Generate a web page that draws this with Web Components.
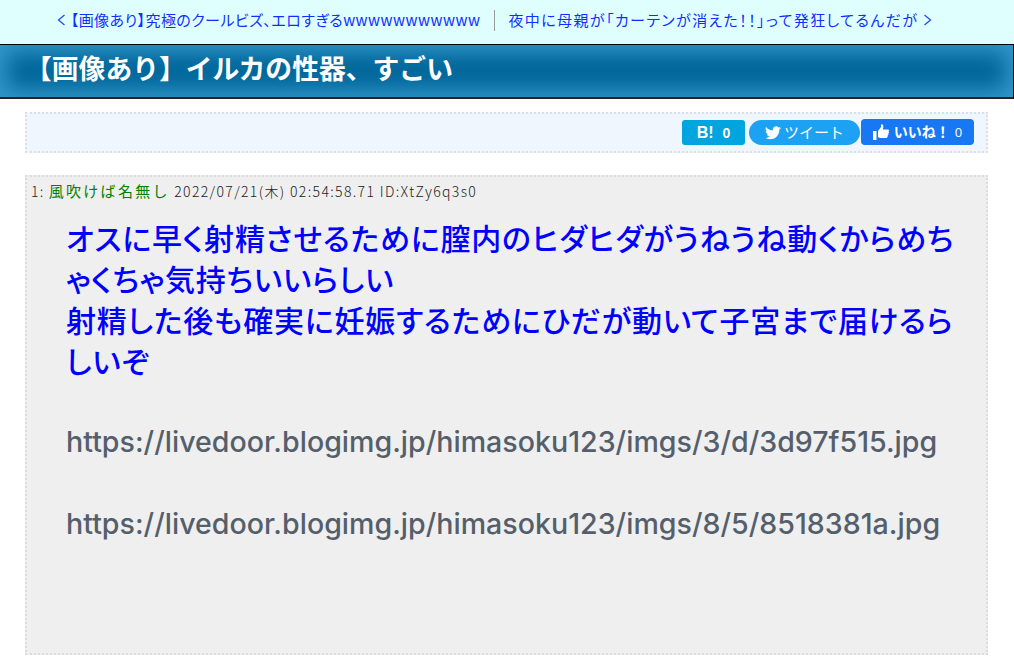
<!DOCTYPE html>
<html lang="ja">
<head>
<meta charset="utf-8">
<title>イルカ</title>
<style>
  html, body { margin: 0; padding: 0; background: #fff; height: 662px; overflow: hidden; }
  body { font-family: "Open Sans", "Noto Sans CJK JP", sans-serif; }
</style>
</head>
<body>
<top-nav></top-nav>
<article-title>【画像あり】イルカの性器、すごい</article-title>
<main-wrap>
  <share-bar></share-bar>
  <res-box number="1:" name="風吹けば名無し" date="2022/07/21(木) 02:54:58.71 ID:XtZy6q3s0">
    オスに早く射精させるために膣内のヒダヒダがうねうね動くからめちゃくちゃ気持ちいいらしい<br>
    射精した後も確実に妊娠するためにひだが動いて子宮まで届けるらしいぞ<br><br>
    <span class="url">https://livedoor.blogimg.jp/himasoku123/imgs/3/d/3d97f515.jpg</span><br><br>
    <span class="url">https://livedoor.blogimg.jp/himasoku123/imgs/8/5/8518381a.jpg</span>
  </res-box>
</main-wrap>

<script>
// top prev/next links
class TopNav extends HTMLElement {
  constructor() {
    super();
    this.attachShadow({ mode: 'open' });
    this.shadowRoot.innerHTML = `
      <style>
        :host {
          display: flex;
          justify-content: center;
          align-items: center;
          height: 44px;
          box-sizing: border-box;
          padding: 0 25px 4px 0;
          background: #dfffff;
          font: 15px/20px "Noto Sans CJK JP", sans-serif;
          font-feature-settings: "palt";
          color: #0f2fff;
        }
        a { color: inherit; text-decoration: none; display: flex; align-items: center; gap: 5px; white-space: nowrap; }
        .prev { letter-spacing: .45px; }
        .next { letter-spacing: 1.400px; }
        .sep { width: 1px; height: 21px; background: #999; margin: 0 13px 0 14px; }
        svg { width: 9px; height: 12px; fill: none; stroke: #2a48f0; stroke-width: 1.3; }
      </style>
      <a class="prev" href="#"><svg viewBox="0 0 9 12"><path d="M7.5 1 L1.5 6 L7.5 11"/></svg>【画像あり】究極のクールビズ、エロすぎるwwwwwwwwwww</a>
      <span class="sep"></span>
      <a class="next" href="#">夜中に母親が「カーテンが消えた！！」って発狂してるんだが<svg viewBox="0 0 9 12"><path d="M1.5 1 L7.5 6 L1.5 11"/></svg></a>`;
  }
}

class ArticleTitle extends HTMLElement {
  constructor() {
    super();
    this.attachShadow({ mode: 'open' });
    this.shadowRoot.innerHTML = `
      <style>
        :host {
          display: block;
          height: 55px;
          box-sizing: border-box;
          border: 1px solid #000;
          border-bottom: 2px solid #222;
          border-left: 0;
          padding: 0 0 0 25px;
          background: #006699;
          box-shadow: inset 0 0 22px 7px #3399cc;
          font: bold 26.800px/46px "Noto Sans CJK JP", sans-serif;
          color: #fff;
          white-space: nowrap;
        }
      </style>
      <slot></slot>`;
  }
}

class MainWrap extends HTMLElement {
  constructor() {
    super();
    this.attachShadow({ mode: 'open' });
    this.shadowRoot.innerHTML = `
      <style>
        :host {
          display: flex;
          flex-direction: column;
          gap: 22px;
          margin: 0 0 0 25px;
          width: 963px;
          padding-top: 13px;
        }
      </style>
      <slot></slot>`;
  }
}

class ShareBar extends HTMLElement {
  constructor() {
    super();
    this.attachShadow({ mode: 'open' });
    this.shadowRoot.innerHTML = `
      <style>
        :host {
          display: flex;
          justify-content: flex-end;
          align-items: flex-start;
          height: 41px;
          box-sizing: border-box;
          border: 2px dotted #d8dfe8;
          background: #eff6fd;
          padding: 5px 12px 0 0;
          font-family: "Noto Sans CJK JP", sans-serif;
          color: #fff;
        }
        div { display: flex; align-items: center; justify-content: center; box-sizing: border-box; white-space: nowrap; }
        .hb { width: 63px; height: 25px; margin-top: 1px; background: #00a4de; border-radius: 3px; font: bold 16px "Liberation Sans", sans-serif; gap: 9px; }
        .hb span + span { font-size: 14px; }
        .tw { width: 111px; height: 25px; margin: 1px 1px 0 4px; background: #1da1f2; border-radius: 13px; font-size: 15px; gap: 3px; }
        .tw span { padding-bottom: 3px; }
        .fb { width: 113px; height: 26px; background: #1877f2; border-radius: 4px; font-size: 14px; font-weight: bold; gap: 5px; }
        .fb span { padding-bottom: 3px; }
        .fb .n { font-weight: normal; margin-left: 0; font-family: "Open Sans", sans-serif; font-size: 13px; padding-bottom: 1px; }
        svg { display: block; fill: #fff; }
      </style>
      <div class="hb"><span>B!</span><span>0</span></div>
      <div class="tw">
        <svg width="16" height="14" viewBox="0 0 24 20"><path d="M24 2.4a9.8 9.8 0 0 1-2.8.8A5 5 0 0 0 23.300.5a9.900 9.900 0 0 1-3.100 1.200 4.900 4.900 0 0 0-8.400 4.500A14 14 0 0 1 1.700.9a4.900 4.900 0 0 0 1.500 6.600 4.900 4.900 0 0 1-2.200-.6v.1a4.900 4.900 0 0 0 3.900 4.800 5 5 0 0 1-2.200.1 4.900 4.900 0 0 0 4.600 3.400A9.900 9.900 0 0 1 0 17.300 14 14 0 0 0 7.500 19.500c9.100 0 14-7.500 14-14v-.6A10 10 0 0 0 24 2.400z"/></svg>
        <span>ツイート</span>
      </div>
      <div class="fb">
        <svg width="16" height="16" viewBox="0 0 16 16"><path d="M0 7h3.500v9H0zM5 7l3-4V0.800C8 0 9 0 9.600.5 10.600 1.500 10.500 3.500 9.800 5.500H15c1 0 1.300 1.300.6 2 .6.700.4 1.700-.3 2.100.4.800.1 1.700-.6 2 .2 1-.3 2.400-1.400 2.400H7.500C6 14 5 13.500 5 12.800z"/></svg>
        <span>いいね！</span><span class="n">0</span>
      </div>`;
  }
}

class ResBox extends HTMLElement {
  constructor() {
    super();
    this.attachShadow({ mode: 'open' });
    const number = this.getAttribute('number');
    const name = this.getAttribute('name');
    const date = this.getAttribute('date');
    this.shadowRoot.innerHTML = `
      <style>
        :host {
          display: block;
          height: 480px;
          box-sizing: border-box;
          border: 2px dotted #dcdcdc;
          background: #efefef;
          padding: 3px 4px 0 4px;
          font-family: "Noto Sans CJK JP", sans-serif;
          color: #222;
        }
        .head { font-size: 14px; font-weight: 300; letter-spacing: 1.350px; line-height: 22px; white-space: nowrap; }
        .name { color: #008000; font-size: 15px; font-weight: 400; letter-spacing: 2.300px; margin: 0 0 0 4px; }
        .body {
          margin: 15px 18px 0 35px;
          font-size: 30px;
          font-feature-settings: "palt";
          letter-spacing: .8px;
          font-weight: 500;
          line-height: 41px;
          color: #0000ff;
        }
        ::slotted(.url) {
          color: #555f6b;
          font-size: 28.600px;
          letter-spacing: 0;
          line-height: 1;
          vertical-align: 3px;
          font-family: "Inter", "Noto Sans CJK JP", sans-serif;
        }
      </style>
      <div class="head">${number}<span class="name">${name}</span> ${date}</div>
      <div class="body"><slot></slot></div>`;
  }
}

customElements.define('top-nav', TopNav);
customElements.define('article-title', ArticleTitle);
customElements.define('main-wrap', MainWrap);
customElements.define('share-bar', ShareBar);
customElements.define('res-box', ResBox);
</script>
</body>
</html>
